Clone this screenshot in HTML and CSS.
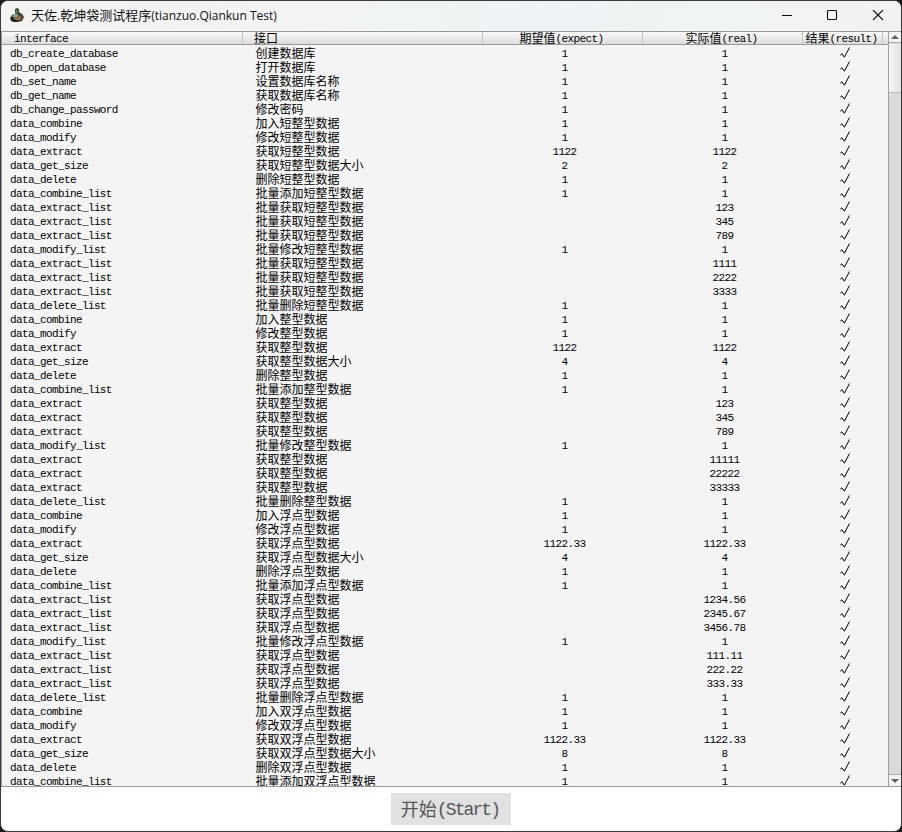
FILE: index.html
```html
<!DOCTYPE html>
<html lang="zh-CN">
<head>
<meta charset="utf-8">
<title>天佐.乾坤袋测试程序(tianzuo.Qiankun Test)</title>
<link rel="stylesheet" href="styles.css">
</head>
<body>
<div class="window">
  <header class="titlebar">
    <svg class="logo" width="14" height="15" viewBox="0 0 14 15">
      <path d="M5 4V1l2-1 2 1 0 3 3 2 2 3-2 4-4 1H4l-3-1-1-3 2-3 3-1z" fill="#39402f"/>
      <path d="M6 2l2 0-1 3-2 1z" fill="#5d806a"/>
      <path d="M2 8l4-3 3 3-4 2z" fill="#78a58a"/>
      <path d="M4 10l6-2 2 1-2 3-5 0z" fill="#a2683e"/>
      <path d="M1 10l3 1 5 3H4l-3-2z" fill="#182019"/>
      <path d="M10 6l2 1 1 3-2-1z" fill="#574134"/>
    </svg>
    <span class="title"><b>天佐</b>.<b>乾坤袋测试程序</b>(tianzuo.Qiankun Test)</span>
    <div class="controls">
      <svg width="12" height="12" viewBox="0 0 12 12"><path d="M1 5.5h10"/></svg>
      <svg width="12" height="12" viewBox="0 0 12 12"><rect x="1.5" y=".5" width="9" height="9" rx="1"/></svg>
      <svg width="12" height="12" viewBox="0 0 12 12"><path d="M1 0l10 10M11 0L1 10"/></svg>
    </div>
  </header>
  <main class="list">
    <div class="table">
      <div class="head">
        <span>interface</span><span><b>接口</b></span><span><b>期望值</b>(expect)</span><span><b>实际值</b>(real)</span><span><b>结果</b>(result)</span><span></span>
      </div>
      <div class="rows" id="rows"></div>
    </div>
    <div class="scroll">
      <div class="arrow"><svg width="8" height="4" viewBox="0 0 8 4"><path d="M0 4L4 0l4 4z"/></svg></div>
      <div class="thumb"></div>
      <div class="track"></div>
      <div class="arrow"><svg width="8" height="4" viewBox="0 0 8 4"><path d="M0 0h8L4 4z"/></svg></div>
    </div>
  </main>
  <footer class="footer"><button class="start">开始<i>(Start)</i></button></footer>
</div>
<script src="app.js"></script>
</body>
</html>
```
FILE: styles.css
```css
* { box-sizing: border-box; }
body { margin: 0; background: #1c1a1b; overflow: hidden; }
.window {
  width: 902px; height: 832px; display: flex; flex-direction: column;
  border: 1px solid #3c3a3c; border-radius: 8px;
  background: #fff; overflow: hidden;
}
.titlebar {
  height: 30px; flex: none; display: flex; align-items: center; padding: 0 17px 0 9px;
  background: linear-gradient(90deg, #f3f3f3 0, #f0f4f4 35%, #edf3f7 60%, #eff4f4 80%, #f1f3f3);
}
.logo { margin: 0 7px 1px 0; }
.title {
  font: 12px/28px "Open Sans", "Noto Sans CJK SC", sans-serif; color: #111;
  white-space: nowrap;
}
.title b { font-size: 13px; font-weight: 400; line-height: 16px; }
.controls { margin-left: auto; display: flex; gap: 33px; }
.controls svg { fill: none; stroke: #111; stroke-width: 1.1; }
.controls svg:nth-child(-n+2) { margin-left: -1px; margin-right: 1px; }
.list { height: 756px; flex: none; display: flex; border: 1px solid #999; border-width: 1px 0 1px 1px; background: #f4f4f4; }
.table {
  flex: 1; overflow: hidden; border-right: 1px solid #a0a0a0;
  font: 11px/14px "Liberation Mono", "Noto Sans CJK SC", monospace;
  letter-spacing: -0.61px; color: #000;
}
.table b { font: 12px/0 "Noto Sans CJK SC", sans-serif; letter-spacing: 0; vertical-align: -1px; }
.head, .row { display: grid; grid-template-columns: 241px 240px 160px 160px 80px 1fr; white-space: nowrap; }
.head { height: 13px; border-bottom: 1px solid #999; background: linear-gradient(#fafafa, #dcdcdc); }
.head span { height: 12px; line-height: 14px; border-right: 1px solid #c4c4c4; text-align: center; }
.head span:nth-child(-n+2) { text-align: left; padding-left: 12px; }
.head span:nth-child(2) { padding-left: 11px; }
.head span:nth-child(3), .head span:nth-child(4), .head span:nth-child(5) { padding-right: 2px; }
.head span:last-child { border: 0; }
.rows { padding-top: 2px; }
.row { height: 14px; }
.row span { height: 14px; text-align: center; }
.row span:first-child { text-align: left; padding-left: 8px; }
.row span:nth-child(2) { text-align: left; padding-left: 12.5px; }
.row span:nth-child(3), .row span:nth-child(4) { padding-left: 3px; }
.row span:nth-child(5) { padding-left: 37px; text-align: left; }
.row svg { display: block; fill: none; stroke: #000; stroke-width: 1; }
.scroll { width: 12px; display: flex; flex-direction: column; background: #dadada; }
.arrow { height: 11px; flex: none; display: flex; align-items: center; justify-content: center; background: #f3f3f3; border-bottom: 1px solid #aaa; }
.arrow:last-child { border-bottom: 0; border-top: 1px solid #aaa; height: 12px; }
.arrow path { fill: #606060; }
.thumb { height: 49px; flex: none; margin-top: 1px; background: linear-gradient(90deg, #f7f7f7, #e3e3e3); border-bottom: 1px solid #bbb; }
.track { flex: 1; }
.footer { flex: 1; display: flex; justify-content: center; align-items: flex-start; padding-top: 6px; }
.start {
  width: 120px; height: 32px; border: 0; padding: 0 2px 3px 0; background: #e1e1e1; color: #555;
  font: 18px/28px "Noto Sans CJK SC", sans-serif; white-space: nowrap;
}
.start i { font: 18px/0 "Liberation Mono", monospace; letter-spacing: -1.9px; vertical-align: 1px; }
```
FILE: app.js
```js
const data = [
  ["db_create_database", "创建数据库", "1", "1"],
  ["db_open_database", "打开数据库", "1", "1"],
  ["db_set_name", "设置数据库名称", "1", "1"],
  ["db_get_name", "获取数据库名称", "1", "1"],
  ["db_change_password", "修改密码", "1", "1"],
  ["data_combine", "加入短整型数据", "1", "1"],
  ["data_modify", "修改短整型数据", "1", "1"],
  ["data_extract", "获取短整型数据", "1122", "1122"],
  ["data_get_size", "获取短整型数据大小", "2", "2"],
  ["data_delete", "删除短整型数据", "1", "1"],
  ["data_combine_list", "批量添加短整型数据", "1", "1"],
  ["data_extract_list", "批量获取短整型数据", "", "123"],
  ["data_extract_list", "批量获取短整型数据", "", "345"],
  ["data_extract_list", "批量获取短整型数据", "", "789"],
  ["data_modify_list", "批量修改短整型数据", "1", "1"],
  ["data_extract_list", "批量获取短整型数据", "", "1111"],
  ["data_extract_list", "批量获取短整型数据", "", "2222"],
  ["data_extract_list", "批量获取短整型数据", "", "3333"],
  ["data_delete_list", "批量删除短整型数据", "1", "1"],
  ["data_combine", "加入整型数据", "1", "1"],
  ["data_modify", "修改整型数据", "1", "1"],
  ["data_extract", "获取整型数据", "1122", "1122"],
  ["data_get_size", "获取整型数据大小", "4", "4"],
  ["data_delete", "删除整型数据", "1", "1"],
  ["data_combine_list", "批量添加整型数据", "1", "1"],
  ["data_extract", "获取整型数据", "", "123"],
  ["data_extract", "获取整型数据", "", "345"],
  ["data_extract", "获取整型数据", "", "789"],
  ["data_modify_list", "批量修改整型数据", "1", "1"],
  ["data_extract", "获取整型数据", "", "11111"],
  ["data_extract", "获取整型数据", "", "22222"],
  ["data_extract", "获取整型数据", "", "33333"],
  ["data_delete_list", "批量删除整型数据", "1", "1"],
  ["data_combine", "加入浮点型数据", "1", "1"],
  ["data_modify", "修改浮点型数据", "1", "1"],
  ["data_extract", "获取浮点型数据", "1122.33", "1122.33"],
  ["data_get_size", "获取浮点型数据大小", "4", "4"],
  ["data_delete", "删除浮点型数据", "1", "1"],
  ["data_combine_list", "批量添加浮点型数据", "1", "1"],
  ["data_extract_list", "获取浮点型数据", "", "1234.56"],
  ["data_extract_list", "获取浮点型数据", "", "2345.67"],
  ["data_extract_list", "获取浮点型数据", "", "3456.78"],
  ["data_modify_list", "批量修改浮点型数据", "1", "1"],
  ["data_extract_list", "获取浮点型数据", "", "111.11"],
  ["data_extract_list", "获取浮点型数据", "", "222.22"],
  ["data_extract_list", "获取浮点型数据", "", "333.33"],
  ["data_delete_list", "批量删除浮点型数据", "1", "1"],
  ["data_combine", "加入双浮点型数据", "1", "1"],
  ["data_modify", "修改双浮点型数据", "1", "1"],
  ["data_extract", "获取双浮点型数据", "1122.33", "1122.33"],
  ["data_get_size", "获取双浮点型数据大小", "8", "8"],
  ["data_delete", "删除双浮点型数据", "1", "1"],
  ["data_combine_list", "批量添加双浮点型数据", "1", "1"]
];
const tick = '<svg width="10" height="11" viewBox="0 0 10 11"><path d="M.3 8.2L2 6.8l2.4 3.4L9.5.5"/></svg>';
document.getElementById("rows").innerHTML = data.map(([name, label, expect, real]) =>
  `<div class="row"><span>${name}</span><span><b>${label}</b></span><span>${expect}</span><span>${real}</span><span>${tick}</span></div>`
).join("");
```
